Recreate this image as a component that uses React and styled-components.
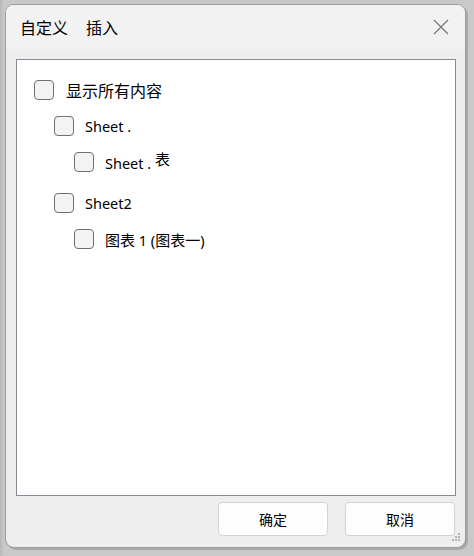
import React from "react";
import styled, { createGlobalStyle } from "styled-components";

const GlobalStyle = createGlobalStyle`
  html, body {
    margin: 0;
    padding: 0;
    background: #c4c4c4;
  }
  body {
    font-family: "Noto Sans", "Noto Sans CJK SC", sans-serif;
  }
`;

const Screen = styled.div`
  width: 474px;
  height: 556px;
  box-sizing: border-box;
  padding: 4px 0 0 5px;
  background: linear-gradient(to right, #b8b8b8 0, #c9c9c9 4px, #c9c9c9 100%);
  overflow: hidden;
`;

const Window = styled.div`
  width: 461px;
  height: 544px;
  box-sizing: border-box;
  display: flex;
  flex-direction: column;
  background: #eeeeee;
  border: 1px solid #9c9c9c;
  border-radius: 9px;
  box-shadow: 2px 2px 0 #a9a9a9;
  position: relative;
`;

const TitleBar = styled.div`
  height: 44px;
  flex: none;
  display: flex;
  align-items: center;
  justify-content: space-between;
  padding: 0 14px 0 14px;
  background: #f2f2f2;
  border-radius: 8px 8px 0 0;
`;

const Title = styled.div`
  display: flex;
  gap: 18px;
  font-family: "Noto Sans CJK SC", sans-serif;
  font-size: 16px;
  color: #000;
`;

const CloseButton = styled.button`
  border: 0;
  background: none;
  padding: 0;
  width: 20px;
  height: 20px;
  display: flex;
  align-items: center;
  justify-content: center;
  cursor: pointer;
`;

const Body = styled.div`
  flex: 1;
  display: flex;
  flex-direction: column;
  padding: 10px 9px 0 10px;
`;

const Panel = styled.div`
  height: 437px;
  box-sizing: border-box;
  background: #fff;
  border: 1px solid #868b94;
  padding: 20px 0 0 17px;
`;

const Tree = styled.div`
  display: flex;
  flex-direction: column;
`;

const Item = styled.label`
  display: flex;
  align-items: center;
  gap: 11px;
  height: 20px;
  margin-left: ${(p) => p.$level * 20}px;
  margin-bottom: ${(p) => p.$gap}px;
  font-size: 14.5px;
  color: #000;
  font-family: "Noto Sans", "Noto Sans CJK SC", sans-serif;
`;

const Box = styled.span`
  width: 18px;
  height: 18px;
  flex: none;
  border: 1px solid #707070;
  border-radius: 4px;
  background: #f3f3f3;
`;

const Cjk = styled.span`
  font-family: "Noto Sans CJK SC", sans-serif;
  font-size: ${(p) => p.$size || 15}px;
  position: relative;
  top: ${(p) => p.$lift || 0}px;
  margin-left: ${(p) => p.$indent || 0}px;
`;

const Footer = styled.div`
  display: flex;
  justify-content: flex-end;
  gap: 17px;
  padding: 6px 1px 0 0;
`;

const Button = styled.button`
  width: 110px;
  height: 34px;
  box-sizing: border-box;
  background: #fdfdfd;
  border: 1px solid #d3d3d3;
  border-radius: 4px;
  font-family: "Noto Sans CJK SC", sans-serif;
  font-size: 14px;
  color: #000;
`;

const Grip = styled.svg`
  position: absolute;
  right: 4px;
  bottom: 4px;
`;

const items = [
  { level: 0, gap: 16, label: <Cjk $size={16} $indent={1}>显示所有内容</Cjk> },
  { level: 1, gap: 16, label: <span>Sheet .</span> },
  {
    level: 2,
    gap: 21,
    label: (
      <span>
        Sheet . <Cjk $lift={-4}>表</Cjk>
      </span>
    ),
  },
  { level: 1, gap: 16, label: <span>Sheet2</span> },
  {
    level: 2,
    gap: 0,
    label: (
      <span>
        <Cjk>图表</Cjk> 1 (<Cjk>图表一</Cjk>)
      </span>
    ),
  },
];

export default function App() {
  return (
    <>
      <GlobalStyle />
      <Screen>
        <Window>
          <TitleBar>
            <Title>
              <span>自定义</span>
              <span>插入</span>
            </Title>
            <CloseButton aria-label="关闭">
              <svg width="16" height="16" viewBox="0 0 16 16">
                <path d="M1 1 L15 15 M15 1 L1 15" stroke="#7a7a7a" strokeWidth="1.3" />
              </svg>
            </CloseButton>
          </TitleBar>
          <Body>
            <Panel>
              <Tree>
                {items.map((it, i) => (
                  <Item key={i} $level={it.level} $gap={it.gap}>
                    <Box />
                    {it.label}
                  </Item>
                ))}
              </Tree>
            </Panel>
            <Footer>
              <Button>确定</Button>
              <Button>取消</Button>
            </Footer>
          </Body>
          <Grip width="10" height="10" viewBox="0 0 10 10">
            <rect x="7" y="0" width="2" height="2" fill="#b5b5b5" />
            <rect x="4" y="3" width="2" height="2" fill="#b5b5b5" />
            <rect x="7" y="3" width="2" height="2" fill="#b5b5b5" />
            <rect x="1" y="6" width="2" height="2" fill="#b5b5b5" />
            <rect x="4" y="6" width="2" height="2" fill="#b5b5b5" />
            <rect x="7" y="6" width="2" height="2" fill="#b5b5b5" />
          </Grip>
        </Window>
      </Screen>
    </>
  );
}
